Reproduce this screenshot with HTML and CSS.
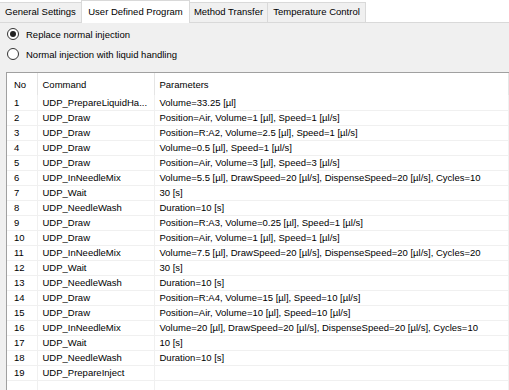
FILE: index.html
```html
<!DOCTYPE html>
<html lang="en">
<head>
    <meta charset="UTF-8">
    <title>User Defined Program</title>
    <link rel="stylesheet" href="styles.css">
</head>
<body>
    <div class="tabs">
        <div class="tab tab-general">General Settings</div>
        <div class="tab tab-udp active">User Defined Program</div>
        <div class="tab tab-transfer">Method Transfer</div>
        <div class="tab tab-temp">Temperature Control</div>
    </div>

    <div class="page">
        <label class="radio"><span class="circle checked"></span>Replace normal injection</label>
        <label class="radio"><span class="circle"></span>Normal injection with liquid handling</label>

        <div class="list">
            <table>
                <colgroup>
                    <col class="col-no">
                    <col class="col-cmd">
                    <col class="col-params">
                </colgroup>
                <thead>
                    <tr><th>No</th><th>Command</th><th>Parameters</th></tr>
                </thead>
                <tbody>
                    <tr><td>1</td><td>UDP_PrepareLiquidHa...</td><td>Volume=33.25 [µl]</td></tr>
                    <tr><td>2</td><td>UDP_Draw</td><td>Position=Air, Volume=1 [µl], Speed=1 [µl/s]</td></tr>
                    <tr><td>3</td><td>UDP_Draw</td><td>Position=R:A2, Volume=2.5 [µl], Speed=1 [µl/s]</td></tr>
                    <tr><td>4</td><td>UDP_Draw</td><td>Volume=0.5 [µl], Speed=1 [µl/s]</td></tr>
                    <tr><td>5</td><td>UDP_Draw</td><td>Position=Air, Volume=3 [µl], Speed=3 [µl/s]</td></tr>
                    <tr><td>6</td><td>UDP_InNeedleMix</td><td>Volume=5.5 [µl], DrawSpeed=20 [µl/s], DispenseSpeed=20 [µl/s], Cycles=10</td></tr>
                    <tr><td>7</td><td>UDP_Wait</td><td>30 [s]</td></tr>
                    <tr><td>8</td><td>UDP_NeedleWash</td><td>Duration=10 [s]</td></tr>
                    <tr><td>9</td><td>UDP_Draw</td><td>Position=R:A3, Volume=0.25 [µl], Speed=1 [µl/s]</td></tr>
                    <tr><td>10</td><td>UDP_Draw</td><td>Position=Air, Volume=1 [µl], Speed=1 [µl/s]</td></tr>
                    <tr><td>11</td><td>UDP_InNeedleMix</td><td>Volume=7.5 [µl], DrawSpeed=20 [µl/s], DispenseSpeed=20 [µl/s], Cycles=20</td></tr>
                    <tr><td>12</td><td>UDP_Wait</td><td>30 [s]</td></tr>
                    <tr><td>13</td><td>UDP_NeedleWash</td><td>Duration=10 [s]</td></tr>
                    <tr><td>14</td><td>UDP_Draw</td><td>Position=R:A4, Volume=15 [µl], Speed=10 [µl/s]</td></tr>
                    <tr><td>15</td><td>UDP_Draw</td><td>Position=Air, Volume=10 [µl], Speed=10 [µl/s]</td></tr>
                    <tr><td>16</td><td>UDP_InNeedleMix</td><td>Volume=20 [µl], DrawSpeed=20 [µl/s], DispenseSpeed=20 [µl/s], Cycles=10</td></tr>
                    <tr><td>17</td><td>UDP_Wait</td><td>10 [s]</td></tr>
                    <tr><td>18</td><td>UDP_NeedleWash</td><td>Duration=10 [s]</td></tr>
                    <tr><td>19</td><td>UDP_PrepareInject</td><td></td></tr>
                    <tr class="filler"><td></td><td></td><td></td></tr>
                </tbody>
            </table>
        </div>
    </div>
</body>
</html>
```

FILE: styles.css
```css
* {
    box-sizing: border-box;
}
body {
    margin: 0;
    width: 509px;
    height: 390px;
    overflow: hidden;
    background: #ffffff;
    font-family: "Liberation Sans", Arial, sans-serif;
    font-size: 9.5px;
    color: #000;
}
.tabs {
    display: flex;
    align-items: flex-end;
    height: 23px;
    border-bottom: 1px solid #d9d9d9;
}
.tab {
    height: 20px;
    line-height: 18px;
    text-align: center;
    white-space: nowrap;
    background: #f0f0f0;
    border: 1px solid #d9d9d9;
    border-bottom: none;
    margin-right: -1px;
}
.tab.active {
    height: 23px;
    line-height: 21px;
    margin-bottom: -1px;
    background: #ffffff;
    position: relative;
    z-index: 1;
}
.tab-general { width: 82px; border-left: none; }
.tab-udp { width: 109px; }
.tab-transfer { width: 79px; }
.tab-temp { width: 99px; }

.page {
    background: #f0f0f0;
    padding: 1px 0 0 6px;
    height: 367px;
    overflow: hidden;
}
.radio {
    display: flex;
    align-items: center;
    height: 20px;
    padding-left: 1px;
}
.circle {
    width: 12px;
    height: 12px;
    border: 1px solid #333;
    border-radius: 50%;
    background: #fff;
    margin-right: 7px;
    display: flex;
    align-items: center;
    justify-content: center;
}
.circle.checked::after {
    content: "";
    width: 6px;
    height: 6px;
    border-radius: 50%;
    background: #222;
}
.list {
    margin-top: 8px;
    height: 318px;
    background: #fff;
    border: 1px solid #a0a0a0;
    border-right: none;
    border-bottom: none;
    overflow: hidden;
}
.list table {
    border-collapse: collapse;
    table-layout: fixed;
    width: 501px;
}
.col-no { width: 30px; }
.col-cmd { width: 117px; }
.col-params { width: 354px; }
.list th {
    height: 22px;
    font-weight: normal;
    text-align: left;
    padding: 0 5px;
    border-right: 1px solid #e5e5e5;
}
.list th:first-child,
.list td:first-child {
    padding-left: 7px;
}
.list td {
    height: 15px;
    padding: 0 5px;
    white-space: nowrap;
    overflow: hidden;
    border-right: 1px solid #f0f0f0;
    border-bottom: 1px solid #f0f0f0;
}
.list .filler td {
    height: 20px;
    border-bottom: none;
}
```
